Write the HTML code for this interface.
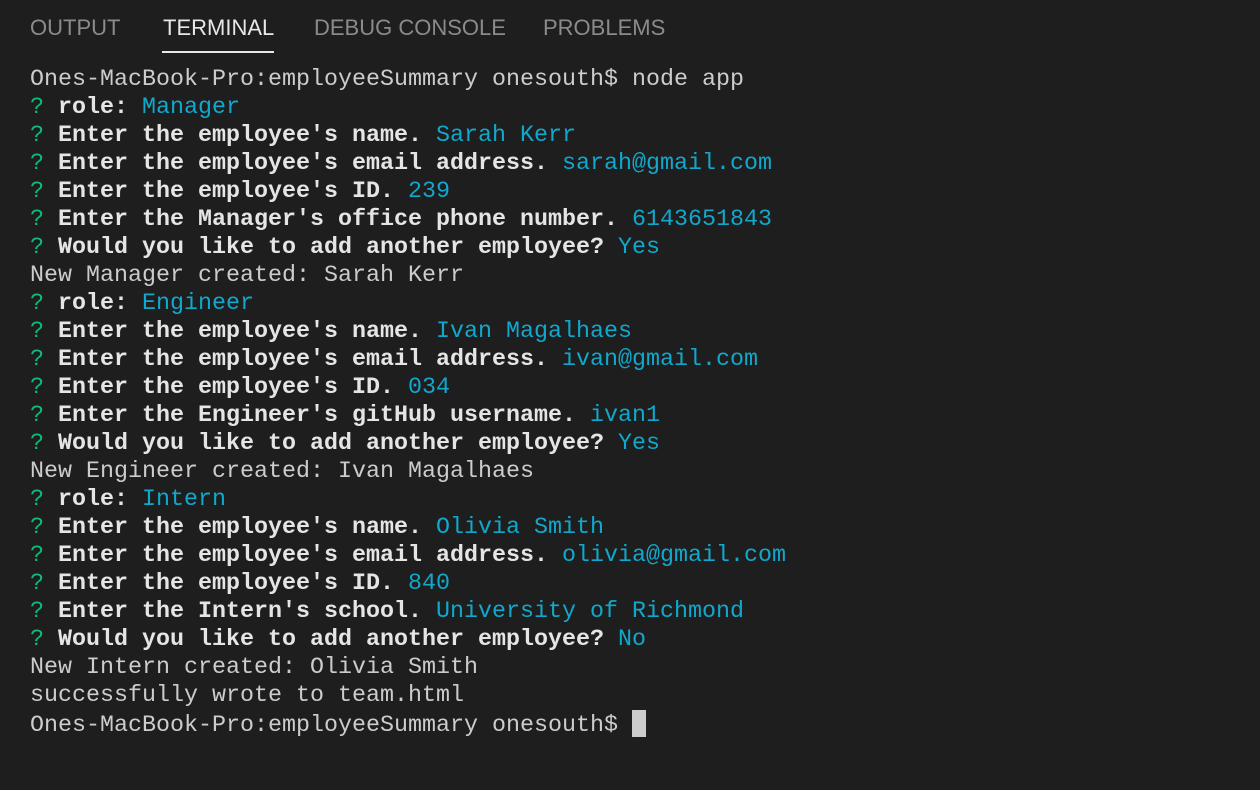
<!DOCTYPE html>
<html><head><meta charset="utf-8"><style>
html,body{margin:0;padding:0;background:#1e1e1e;width:1260px;height:790px;overflow:hidden}
.tabs{position:absolute;top:15px;left:0;font-family:"Liberation Sans",sans-serif;font-size:22px;color:#8b8b8b}
.tabs span{position:absolute;white-space:nowrap;top:0}
.ul{position:absolute;left:162px;top:51px;width:112px;height:2px;background:#e7e7e7}
pre{position:absolute;left:30px;top:66px;margin:0;font-family:"Liberation Mono",monospace;font-size:23.33px;line-height:28px;color:#cccccc}
.g{color:#0dbc79}.c{color:#11a8cd}b{color:#e5e5e5}
.cur{display:inline-block;width:14px;height:27px;background:#cccccc;vertical-align:-6px}
</style></head><body>
<div class="tabs">
<span style="left:30px">OUTPUT</span>
<span style="left:163px;color:#e7e7e7">TERMINAL</span>
<span style="left:314px">DEBUG CONSOLE</span>
<span style="left:543px">PROBLEMS</span>
</div>
<div class="ul"></div>
<pre>Ones-MacBook-Pro:employeeSummary onesouth$ node app
<span class="g">?</span> <b>role:</b> <span class="c">Manager</span>
<span class="g">?</span> <b>Enter the employee's name.</b> <span class="c">Sarah Kerr</span>
<span class="g">?</span> <b>Enter the employee's email address.</b> <span class="c">sarah@gmail.com</span>
<span class="g">?</span> <b>Enter the employee's ID.</b> <span class="c">239</span>
<span class="g">?</span> <b>Enter the Manager's office phone number.</b> <span class="c">6143651843</span>
<span class="g">?</span> <b>Would you like to add another employee?</b> <span class="c">Yes</span>
New Manager created: Sarah Kerr
<span class="g">?</span> <b>role:</b> <span class="c">Engineer</span>
<span class="g">?</span> <b>Enter the employee's name.</b> <span class="c">Ivan Magalhaes</span>
<span class="g">?</span> <b>Enter the employee's email address.</b> <span class="c">ivan@gmail.com</span>
<span class="g">?</span> <b>Enter the employee's ID.</b> <span class="c">034</span>
<span class="g">?</span> <b>Enter the Engineer's gitHub username.</b> <span class="c">ivan1</span>
<span class="g">?</span> <b>Would you like to add another employee?</b> <span class="c">Yes</span>
New Engineer created: Ivan Magalhaes
<span class="g">?</span> <b>role:</b> <span class="c">Intern</span>
<span class="g">?</span> <b>Enter the employee's name.</b> <span class="c">Olivia Smith</span>
<span class="g">?</span> <b>Enter the employee's email address.</b> <span class="c">olivia@gmail.com</span>
<span class="g">?</span> <b>Enter the employee's ID.</b> <span class="c">840</span>
<span class="g">?</span> <b>Enter the Intern's school.</b> <span class="c">University of Richmond</span>
<span class="g">?</span> <b>Would you like to add another employee?</b> <span class="c">No</span>
New Intern created: Olivia Smith
successfully wrote to team.html
Ones-MacBook-Pro:employeeSummary onesouth$ <span class="cur"></span></pre>
</body></html>
